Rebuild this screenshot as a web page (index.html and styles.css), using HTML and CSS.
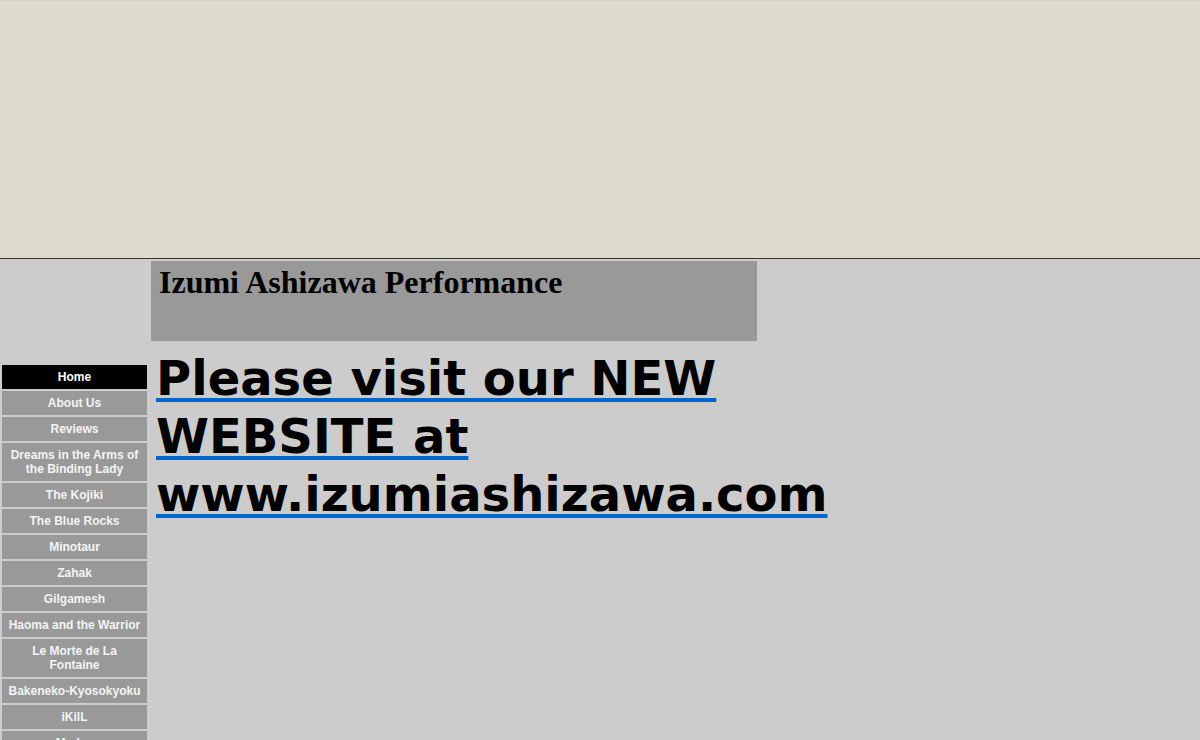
FILE: index.html
```html
<!DOCTYPE html>
<html>
<head>
<meta charset="utf-8">
<link rel="stylesheet" href="styles.css">
</head>
<body>
<div class="banner"></div>
<div class="main">
  <nav class="sidebar">
    <a class="nav-item active" href="#">Home</a>
    <a class="nav-item" href="#">About Us</a>
    <a class="nav-item" href="#">Reviews</a>
    <a class="nav-item two" href="#">Dreams in the Arms of the Binding Lady</a>
    <a class="nav-item" href="#">The Kojiki</a>
    <a class="nav-item" href="#">The Blue Rocks</a>
    <a class="nav-item" href="#">Minotaur</a>
    <a class="nav-item" href="#">Zahak</a>
    <a class="nav-item" href="#">Gilgamesh</a>
    <a class="nav-item" href="#">Haoma and the Warrior</a>
    <a class="nav-item two" href="#">Le Morte de La Fontaine</a>
    <a class="nav-item" href="#">Bakeneko-Kyosokyoku</a>
    <a class="nav-item" href="#">iKilL</a>
    <a class="nav-item" href="#">Medea</a>
  </nav>
  <div class="content">
    <div class="title-box"><h1 class="title">Izumi Ashizawa Performance</h1></div>
    <h2 class="notice"><a class="notice-link" href="#"><span class="notice-text">Please visit our NEW WEBSITE at www.izumiashizawa.com</span></a></h2>
  </div>
</div>
</body>
</html>
```
FILE: styles.css
```css
html, body {
  margin: 0;
  padding: 0;
  background: #cccccc;
  overflow: hidden;
}
.banner {
  box-sizing: border-box;
  height: 259px;
  background: #dfdbcf;
  border-top: 1px solid #d4d0c4;
  border-bottom: 1px solid #333333;
}
.main {
  display: flex;
  align-items: flex-start;
}
.sidebar {
  width: 145px;
  margin-left: 2px;
  margin-top: 106px;
  display: flex;
  flex-direction: column;
  gap: 2px;
}
.nav-item {
  display: flex;
  align-items: center;
  justify-content: center;
  text-align: center;
  min-height: 24px;
  padding: 2px 4px;
  box-sizing: border-box;
  background: #999999;
  color: #f4f4f4;
  font-family: "Liberation Sans", Arial, sans-serif;
  font-weight: bold;
  font-size: 12px;
  line-height: 14px;
  text-decoration: none;
}
.nav-item.two {
  min-height: 38px;
}
.nav-item.active {
  background: #000000;
  color: #ffffff;
}
.content {
  margin-left: 4px;
  margin-top: 2px;
}
.title-box {
  width: 606px;
  height: 80px;
  background: #999999;
  padding: 3px 8px;
  box-sizing: border-box;
}
.title {
  margin: 0;
  font-family: "Liberation Serif", "Times New Roman", serif;
  font-weight: bold;
  font-size: 32px;
  line-height: 36px;
  color: #000;
}
.notice {
  margin: 8px 0 0 5px;
  width: 700px;
  font-family: "DejaVu Sans", Verdana, sans-serif;
  font-weight: bold;
  font-size: 48px;
  line-height: 58px;
}
.notice-link {
  color: #0066cc;
  text-decoration: underline;
  text-decoration-thickness: 4px;
  text-underline-offset: 3px;
}
.notice-text {
  color: #000000;
}
```
